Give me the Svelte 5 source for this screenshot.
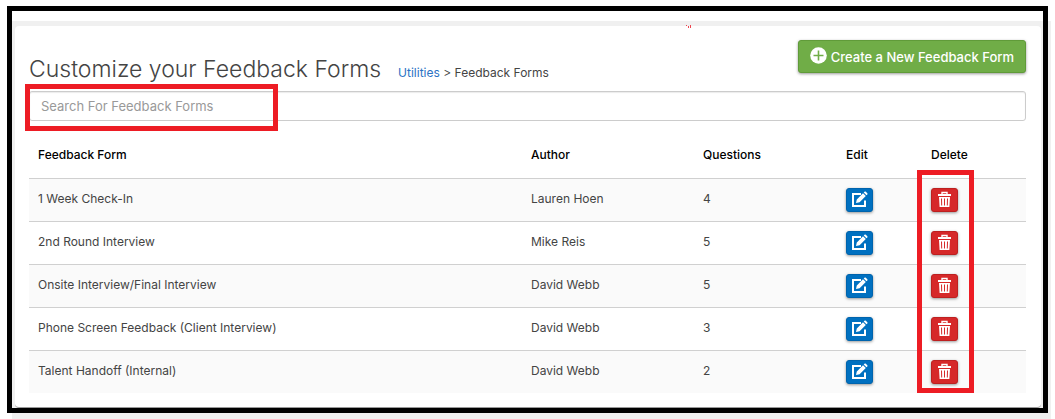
<script>
	let search = '';

	const forms = [
		{ name: '1 Week Check-In', author: 'Lauren Hoen', questions: 4 },
		{ name: '2nd Round Interview', author: 'Mike Reis', questions: 5 },
		{ name: 'Onsite Interview/Final Interview', author: 'David Webb', questions: 5 },
		{ name: 'Phone Screen Feedback (Client Interview)', author: 'David Webb', questions: 3 },
		{ name: 'Talent Handoff (Internal)', author: 'David Webb', questions: 2 }
	];

	$: visibleForms = forms.filter((form) => form.name.toLowerCase().includes(search.toLowerCase()));
</script>

<div class="page">
	<div class="backdrop">
		<main class="card">
			<header>
				<div class="title">
					<h1>Customize your Feedback Forms</h1>
					<nav aria-label="Breadcrumb">
						<a href="#utilities">Utilities</a> &gt; <span>Feedback Forms</span>
					</nav>
				</div>
				<button class="create-button" type="button">
					<svg width="17" height="19" viewBox="0 0 17 19" aria-hidden="true">
						<circle cx="8.5" cy="8.5" r="8.3" fill="#fff" />
						<path d="M8.5 3.5v10M3.5 8.5h10" stroke="#70ad47" stroke-width="1.6" />
					</svg>
					Create a New Feedback Form
				</button>
			</header>

			<div class="search">
				<input type="text" placeholder="Search For Feedback Forms" aria-label="Search For Feedback Forms" bind:value={search} />
				<div class="highlight search-highlight"></div>
			</div>

			<div class="table-wrapper">
				<table>
					<thead>
						<tr>
							<th>Feedback Form</th>
							<th class="author">Author</th>
							<th class="questions">Questions</th>
							<th class="edit">Edit</th>
							<th class="delete">Delete</th>
						</tr>
					</thead>
					<tbody>
						{#each visibleForms as form}
							<tr>
								<td>{form.name}</td>
								<td>{form.author}</td>
								<td>{form.questions}</td>
								<td>
									<button class="icon-button edit-button" type="button" aria-label="Edit {form.name}">
										<svg width="17" height="18" viewBox="0 0 17 18" aria-hidden="true">
											<path d="M10 3H2v12h12V9.5" fill="none" stroke="#fff" stroke-width="2" />
											<path d="M5 12l.8-3.6L12 2.2l2.8 2.8-6.2 6.2zM12.7 1.5l.8-.8c.4-.4.9-.4 1.3 0l1.5 1.5c.4.4.4.9 0 1.3l-.8.8z" fill="#fff" />
										</svg>
									</button>
								</td>
								<td>
									<button class="icon-button delete-button" type="button" aria-label="Delete {form.name}">
										<svg width="13" height="18" viewBox="0 0 13 18" aria-hidden="true">
											<path d="M4 3V1.5h5V3" fill="none" stroke="#fff" stroke-width="1.4" />
											<path d="M0 3h13v2H0z" fill="#fff" />
											<path fill-rule="evenodd" d="M1 6h11l-.6 10H1.6zM3 7.5l.2 7h1l-.2-7zM6 7.5v7h1v-7zM9 7.5l-.2 7h1l.2-7z" fill="#fff" />
										</svg>
									</button>
								</td>
							</tr>
						{/each}
					</tbody>
				</table>
				<div class="highlight delete-highlight"></div>
			</div>
		</main>
	</div>

	<!-- Callout frame and the stray pen mark at its top edge -->
	<div class="frame"></div>
	<svg class="pen-mark" width="6" height="3" viewBox="0 0 6 3" aria-hidden="true">
		<path d="M0 0h1v1H0zM2 1h1v2H2zM4 0h1v3H4z" fill="#ed4650" />
	</svg>
</div>

<style>
	:global(body) {
		background: #fff;
	}

	.page {
		position: relative;
		padding: 21px 4px 0 12px;
		font-family: Inter, "Open Sans", sans-serif;
		font-size: 12px;
		line-height: 20px;
		color: #444;
	}

	.backdrop {
		background: #f0f0f0;
		padding: 5px 10px 11px 3px;
	}

	.card {
		background: #fff;
		border-bottom: 1px solid #999;
		border-radius: 4px;
		padding: 14px 15px 14px 14px;
	}

	header {
		display: flex;
		justify-content: space-between;
		height: 51px;
	}

	.title {
		display: flex;
		align-items: baseline;
		gap: 17px;
		padding-top: 14px;
	}

	h1 {
		margin: 0;
		font-size: 23px;
		font-weight: 300;
		line-height: 30px;
		white-space: nowrap;
	}

	nav {
		white-space: nowrap;
	}

	nav a {
		color: #2b72c4;
		text-decoration: none;
	}

	button {
		font-family: inherit;
		cursor: pointer;
	}

	.create-button {
		display: flex;
		align-items: center;
		align-self: flex-start;
		gap: 4px;
		height: 33px;
		padding: 0 11px;
		background: #70ad47;
		color: #fff;
		border: 1px solid #609b39;
		border-radius: 3px;
		box-shadow: 0 1px 3px rgba(0, 0, 0, 0.4);
		font-size: 13px;
		font-weight: 500;
		white-space: nowrap;
	}

	.search {
		position: relative;
		margin-bottom: 10px;
	}

	input {
		display: block;
		box-sizing: border-box;
		width: 100%;
		height: 30px;
		padding: 0 11px;
		border: 1px solid #ccc;
		border-radius: 3px;
		box-shadow: inset 0 1px 1px rgba(0, 0, 0, 0.08);
		font-family: inherit;
		font-size: 13px;
		color: #444;
	}

	input::placeholder {
		color: #999;
	}

	/* Red callout boxes */
	.highlight {
		position: absolute;
		box-sizing: border-box;
		border: 5px solid #ed1c24;
		pointer-events: none;
	}

	.search-highlight {
		top: -7px;
		left: -4px;
		width: 253px;
		height: 47px;
	}

	.delete-highlight {
		top: 39px;
		right: 52px;
		bottom: 0;
		width: 57px;
	}

	.table-wrapper {
		position: relative;
	}

	table {
		width: 100%;
		table-layout: fixed;
		border-collapse: separate;
		border-spacing: 0;
	}

	th {
		padding: 14px 9px 13px;
		text-align: left;
		font-weight: 500;
		color: #000;
	}

	.author {
		width: 154px;
	}

	.questions {
		width: 125px;
	}

	.edit {
		width: 67px;
	}

	.delete {
		width: 86px;
	}

	td {
		padding: 9px;
		border-top: 1px solid #d0d0d0;
		line-height: 22px;
		vertical-align: top;
	}

	tbody tr:nth-child(odd) {
		background: #fafafa;
	}

	.icon-button {
		display: flex;
		align-items: center;
		justify-content: center;
		width: 27px;
		height: 24px;
		padding: 0;
		border-radius: 3px;
		box-shadow: 0 1px 3px rgba(0, 0, 0, 0.4);
	}

	.edit-button {
		background: #0070c0;
		border: 1px solid #0064ad;
	}

	.delete-button {
		background: #d62829;
		border: 1px solid #bd2020;
	}

	.frame {
		position: absolute;
		inset: 6px 7px;
		border: 5px solid #000;
		pointer-events: none;
	}

	.pen-mark {
		position: absolute;
		top: 25px;
		left: 65%;
	}
</style>
